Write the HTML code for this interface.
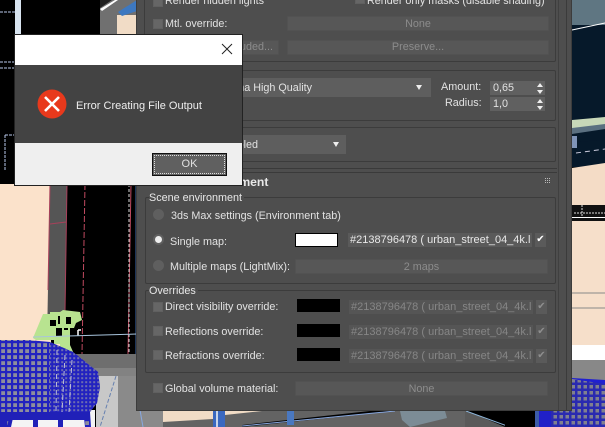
<!DOCTYPE html>
<html><head><meta charset="utf-8">
<style>
html,body{margin:0;padding:0;background:#000}
#r{position:relative;width:605px;height:427px;overflow:hidden;font-family:"Liberation Sans",sans-serif;font-size:10.8px;color:#e2e2e2;filter:blur(.3px)}
#r div,#r span{position:absolute;box-sizing:border-box;white-space:nowrap}
.t{line-height:14px;height:14px}
.cb{width:10px;height:10px;background:#666;border:1px solid #606060}
.btn{background:#575757;border:1px solid #525252;color:#8c8c8c;text-align:center;border-radius:1px}
.grp{border:1px solid #3c3c3c;border-radius:2px}
.map{background:#5a5a5a;height:14px;line-height:14px;padding-left:2px;width:184px;overflow:hidden;font-size:11px}
.dis{color:#868686;background:#555}
.blk{background:#000;left:297px;width:43px;height:13px}
.chk{width:11px;height:14px;background:#5a5a5a;text-align:center;line-height:14px;font-size:10px}
</style></head><body>
<div id="r">
<svg style="position:absolute;left:0;top:0" width="605" height="427" viewBox="0 0 605 427">
<defs>
<pattern id="g" width="6" height="6" patternUnits="userSpaceOnUse"><rect width="6" height="6" fill="#2222c0"/><rect x="1.2" y="1.2" width="3.8" height="3.8" fill="#8e8e9c"/></pattern>
<pattern id="d" width="4" height="4" patternUnits="userSpaceOnUse"><rect width="4" height="4" fill="#2222c0"/><rect x="1.2" y="1.2" width="2" height="2" fill="#6d6db0"/></pattern>
<pattern id="h" width="6" height="6" patternUnits="userSpaceOnUse"><rect width="6" height="6" fill="#2a2ab0"/><rect x="1.5" y="1" width="3.5" height="3.5" fill="#80808f"/></pattern>
</defs>
<rect width="605" height="427" fill="#000"/>
<rect x="15" y="0" width="6" height="35" fill="#d8e4f0"/>
<path d="M0 12H15M0 62H15M0 68H15M5 135H15M5 135V170" stroke="#b9c8ea" stroke-width="1" fill="none" stroke-dasharray="3 1"/>
<rect x="100" y="0" width="37" height="36" fill="#707070"/>
<rect x="117" y="15" width="20" height="22" fill="#f1dcc6"/>
<path d="M100 0H112L100 8Z" fill="#222"/>
<path d="M100 9L115 0H118L102 11Z" fill="#fff"/>
<path d="M118 12L137 0V11L122 16Z" fill="#3d78c0"/>
<rect x="0" y="184" width="51" height="160" fill="#fbe2cb"/>
<path d="M50 184H67L65 340H47Z" fill="#555"/>
<path d="M50 224L66 222M67 184L65 312M50 184L48 290" stroke="#a8405a" stroke-width="1" fill="none"/>
<path d="M85 184L82 354" stroke="#c04a60" fill="none" stroke-dasharray="6 2"/>
<path d="M131 184L128 354" stroke="#c04a60" fill="none"/>
<path d="M129 184V354" stroke="#ddd" fill="none" stroke-dasharray="3 2"/>
<path d="M136 184V354" stroke="#3c6ab0" fill="none"/>
<!-- plant -->
<path d="M33 338L43 314H50V312H60L63 310L80 312L82 320L76 323L74 328H70V345L74 354H54V340H36Z" fill="#b8e390"/>
<path d="M36 338L45 315" stroke="#b8e390" stroke-width="2"/>
<path d="M50 320H56V326H50ZM58 316h2v8h-2zM56 328h6v8h-6zM66 317h5v7h-5zM64 328h4v2h-4z" fill="#000"/>
<path d="M78 330V336M78 330H81" stroke="#fff" stroke-width="1.5" fill="none"/>
<rect x="74" y="354" width="63" height="22" fill="#6e6e6e"/>
<rect x="74" y="368" width="63" height="8" fill="#828282"/>
<rect x="96" y="376" width="22" height="51" fill="#c8c8c8"/>
<rect x="118" y="376" width="19" height="51" fill="#8a8a8a"/>
<path d="M116 376L100 427" stroke="#6680b0" stroke-dasharray="4 2"/>
<path d="M33 337L137 334" stroke="#a8c4dc"/>
<rect x="0" y="344" width="60" height="10" fill="#fbe2cb"/>
<rect x="0" y="410" width="95" height="17" fill="#f4f4f4"/>
<path d="M0 340H28L50 342L73 352L98 372L100 387L97 403L90 412L91 427H85L84 418H63L62 427H59L58 418H38L37 427H34V418H12L9 427H0Z" fill="url(#g)"/>
<path d="M50 342L73 352L98 372L100 387L97 403L90 412V418H50Z" fill="url(#d)"/>
<path d="M0 412H90V420H0Z" fill="#2020b8"/>
<path d="M0 420H7V427H0ZM9 418H13L11 427H7ZM33 420H38V427H33ZM58 420H63V427H58Z" fill="#2020b8"/>
<path d="M57 350L56 412M65 355L62 412M72 360L69 412" stroke="#c0c0d8" stroke-width="1" stroke-dasharray="5 3"/>
<rect x="572" y="0" width="33" height="30" fill="#5f7682"/>
<rect x="572" y="25" width="33" height="95" fill="#06192a"/>
<path d="M572 30L605 23" stroke="#fff"/>
<path d="M572 120L605 117V126L572 129Z" fill="#c8d8b8"/>
<path d="M572 128L605 124V130L572 135Z" fill="#5b7080"/>
<rect x="572" y="135" width="33" height="32" fill="#06192a"/>
<path d="M572 134L605 129V140L572 142Z" fill="#06192a"/>
<rect x="572" y="136" width="5" height="12" fill="#7f94b8"/>
<path d="M576 153L605 149" stroke="#ccd" stroke-dasharray="5 4"/>
<path d="M572 168L605 163V206H572Z" fill="#f4dcc6"/>
<rect x="572" y="205" width="33" height="16" fill="#111"/>
<path d="M574 213H605M582 205V216" stroke="#ddd" stroke-dasharray="2 1"/>
<rect x="572" y="217" width="33" height="1" fill="#fff"/>
<rect x="572" y="221" width="33" height="125" fill="#f6dfca"/>
<path d="M572 293H605M572 308H605" stroke="#888"/>
<rect x="572" y="345" width="33" height="15" fill="#fff"/>
<rect x="572" y="360" width="33" height="20" fill="#888"/>
<rect x="572" y="380" width="33" height="47" fill="url(#h)"/>
<path d="M572 379L605 384V380L572 378Z" fill="#2020d0"/>
<!-- bottom strip -->
<rect x="137" y="410" width="435" height="17" fill="#636363"/>
<rect x="137" y="410" width="26" height="17" fill="#8a8a8a"/>
<path d="M140 410L143 427" stroke="#88a8e0"/>
<rect x="163" y="410" width="50" height="17" fill="#636363"/>
<path d="M163 411H213V419L163 422Z" fill="#f1dcc6"/>
<rect x="213" y="410" width="12" height="17" fill="#3a68c0"/>
<rect x="216" y="410" width="2" height="17" fill="#c8d4e8"/>
<path d="M225 411H262L225 415Z" fill="#f1dcc6"/>
<path d="M242 427L395 411H370L242 425Z" fill="#000"/>
<path d="M242 426L395 411" stroke="#88a8e0" stroke-width="1"/>
<rect x="287" y="410" width="7" height="15" fill="#4a78c0"/>
<path d="M400 411H445L447 418L410 427L402 420Z" fill="#7c8c96"/>
<path d="M465 410L505 427H465Z" fill="#5a5a5a"/>
<path d="M465 410H505V427Z" fill="#000"/>
<path d="M466 411L510 427" stroke="#8cb4d8"/>
<rect x="505" y="410" width="30" height="17" fill="#000"/>
<rect x="535" y="410" width="4" height="17" fill="#3c5ca8"/>
<rect x="539" y="410" width="12" height="17" fill="#2020c8"/>
<rect x="551" y="410" width="21" height="17" fill="url(#h)"/>
</svg>

<div style="left:136px;top:0;width:436px;height:411px;background:#4e4e4e;border:1px solid #3c3c3c;border-top:0"></div>
<div style="left:566px;top:0;width:1px;height:410px;background:#3b3b3b"></div>
<div style="left:558px;top:0;width:1px;height:410px;background:#404040"></div>

<div class="grp" style="left:144px;top:-4px;width:412px;height:66px"></div>
<div class="cb" style="left:153px;top:-3px"></div>
<span class="t" style="left:165px;top:-6px">Render hidden lights</span>
<div class="cb" style="left:355px;top:-6px"></div>
<span class="t" style="left:367px;top:-6px">Render only masks (disable shading)</span>
<div class="cb" style="left:153px;top:19px"></div>
<span class="t" style="left:165px;top:17px">Mtl. override:</span>
<div class="btn" style="left:287px;top:16px;width:262px;height:15px;line-height:14px">None</div>
<div class="btn" style="left:200px;top:40px;width:79px;height:15px;line-height:13px;text-align:right;padding-right:5px">Excluded...</div>
<div class="btn" style="left:287px;top:40px;width:262px;height:15px;line-height:13px">Preserve...</div>

<div class="grp" style="left:144px;top:70px;width:412px;height:51px"></div>
<div style="left:200px;top:78px;width:231px;height:19px;background:#5e5e5e"></div>
<span class="t" style="left:213px;top:81px">Cinema High Quality</span>
<div style="left:416px;top:85px;border-left:3.5px solid transparent;border-right:3.5px solid transparent;border-top:5px solid #eee"></div>
<span class="t" style="left:441px;top:80px">Amount:</span>
<span class="t" style="left:445px;top:96px">Radius:</span>
<div style="left:490px;top:81px;width:55px;height:14px;background:#606060"></div>
<div style="left:490px;top:97px;width:55px;height:14px;background:#606060"></div>
<span class="t" style="left:493px;top:81px">0,65</span>
<span class="t" style="left:493px;top:97px">1,0</span>
<svg style="position:absolute;left:536px;top:82px" width="8" height="30"><path d="M4 1L7 5H1ZM4 12L7 8H1ZM4 17L7 21H1ZM4 28L7 24H1Z" fill="#eee"/></svg>

<div class="grp" style="left:144px;top:127px;width:412px;height:35px"></div>
<div style="left:200px;top:135px;width:146px;height:19px;background:#5e5e5e"></div>
<span class="t" style="left:216px;top:138px">Disabled</span>
<div style="left:333px;top:142px;border-left:3.5px solid transparent;border-right:3.5px solid transparent;border-top:5px solid #eee"></div>
<div style="left:137px;top:168px;width:420px;height:1px;background:#3a3a3a"></div>
<div style="left:137px;top:172px;width:420px;height:1px;background:#3a3a3a"></div>
<span class="t" style="left:156px;top:175px;font-weight:bold;font-size:12.2px;color:#e8e8e8">Scene environment</span>
<svg style="position:absolute;left:545px;top:178px" width="6" height="6"><path d="M0 0h1v1H0zM2 0h1v1H2zM4 0h1v1H4zM0 2h1v1H0zM2 2h1v1H2zM4 2h1v1H4zM0 4h1v1H0zM2 4h1v1H2zM4 4h1v1H4z" fill="#bbb"/></svg>

<div class="grp" style="left:145px;top:197px;width:411px;height:87px"></div>
<span class="t" style="left:149px;top:191px;background:#4e4e4e;padding-right:2px;color:#e8e8e8">Scene environment</span>
<div style="left:153px;top:209px;width:11px;height:11px;border-radius:50%;background:#5f5f5f"></div>
<span class="t" style="left:171px;top:209px">3ds Max settings (Environment tab)</span>
<div style="left:153px;top:234px;width:11px;height:11px;border-radius:50%;background:#5f5f5f"></div>
<div style="left:155px;top:236px;width:7px;height:7px;border-radius:50%;background:#eee"></div>
<span class="t" style="left:170px;top:235px">Single map:</span>
<div style="left:295px;top:233px;width:43px;height:14px;background:#fff;border:1px solid #000"></div>
<div class="map" style="left:348px;top:233px;color:#e8e8e8">#2138796478 ( urban_street_04_4k.l</div>
<div class="chk" style="left:535px;top:233px;color:#fff">✔</div>
<div style="left:153px;top:260px;width:11px;height:11px;border-radius:50%;background:#5f5f5f"></div>
<span class="t" style="left:170px;top:260px">Multiple maps (LightMix):</span>
<div class="btn" style="left:295px;top:259px;width:253px;height:15px;line-height:14px">2 maps</div>

<div class="grp" style="left:145px;top:290px;width:411px;height:83px"></div>
<span class="t" style="left:149px;top:284px;background:#4e4e4e;padding-right:2px;color:#e8e8e8">Overrides</span>

<div class="cb" style="left:153px;top:302px"></div>
<span class="t" style="left:165px;top:300px">Direct visibility override:</span>
<div class="blk" style="top:299px"></div>
<div class="map dis" style="left:349px;top:300px">#2138796478 ( urban_street_04_4k.l</div>
<div class="chk" style="left:536px;top:300px;color:#8e8e8e">✔</div>

<div class="cb" style="left:153px;top:326px"></div>
<span class="t" style="left:165px;top:325px">Reflections override:</span>
<div class="blk" style="top:324px"></div>
<div class="map dis" style="left:349px;top:325px">#2138796478 ( urban_street_04_4k.l</div>
<div class="chk" style="left:536px;top:325px;color:#8e8e8e">✔</div>

<div class="cb" style="left:153px;top:350px"></div>
<span class="t" style="left:165px;top:349px">Refractions override:</span>
<div class="blk" style="top:348px"></div>
<div class="map dis" style="left:349px;top:349px">#2138796478 ( urban_street_04_4k.l</div>
<div class="chk" style="left:536px;top:349px;color:#8e8e8e">✔</div>

<div class="cb" style="left:153px;top:383px"></div>
<span class="t" style="left:165px;top:382px">Global volume material:</span>
<div class="btn" style="left:295px;top:381px;width:253px;height:15px;line-height:14px">None</div>

<div style="left:15px;top:35px;width:227px;height:150px;background:#434343;box-shadow:0 0 0 1px #222"></div>
<div style="left:15px;top:35px;width:227px;height:30px;background:#fff"></div>
<div style="left:15px;top:143px;width:227px;height:42px;background:#efefef"></div>
<svg style="position:absolute;left:221px;top:43px" width="12" height="12"><path d="M1 1L11 11M11 1L1 11" stroke="#222" stroke-width="1"/></svg>
<svg style="position:absolute;left:37px;top:89px" width="30" height="30"><circle cx="15" cy="15" r="14.5" fill="#e8391c"/><path d="M8 8L22 22M22 8L8 22" stroke="#fff" stroke-width="2.6"/></svg>
<span class="t" style="left:76px;top:99px;font-size:11px;color:#eee">Error Creating File Output</span>
<div style="left:152px;top:153px;width:75px;height:23px;background:#606060;border:1px solid #111;color:#e0e0e0;text-align:center;line-height:21px;font-size:11px">OK</div>
<div style="left:154px;top:155px;width:71px;height:19px;border:1px dotted #ddd"></div>
</div>
</body></html>
